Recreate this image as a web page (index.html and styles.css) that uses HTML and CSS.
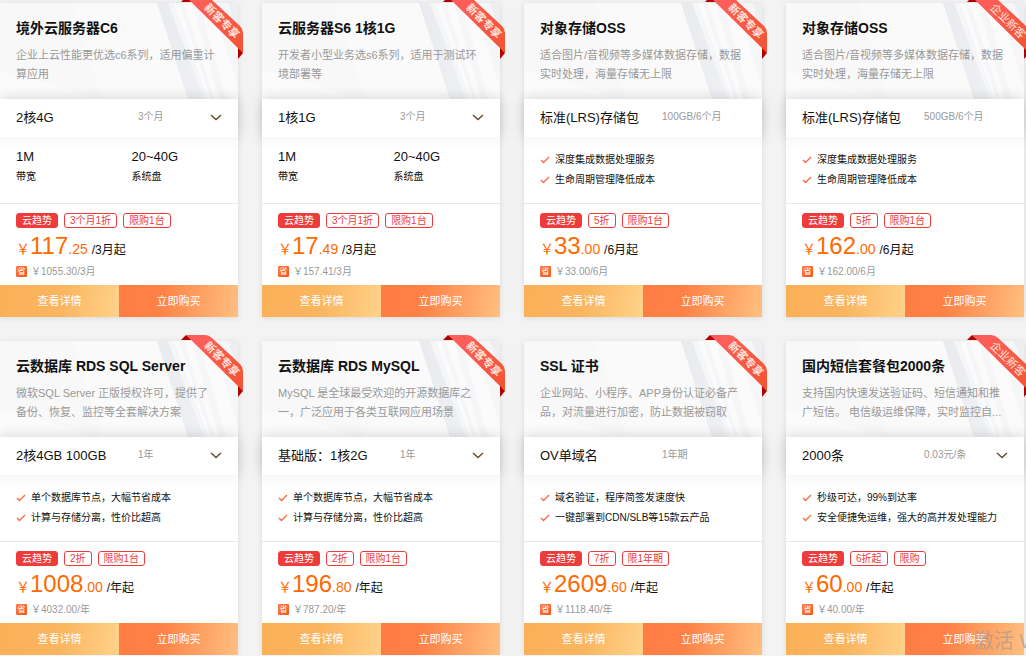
FILE: index.html
```
<!DOCTYPE html>
<html lang="zh-CN">
<head>
    <meta charset="UTF-8">
    <meta name="viewport" content="width=device-width, initial-scale=1.0">
    <title>云产品特惠</title>
    <link rel="stylesheet" href="styles.css">
</head>
<body>
    <svg width="0" height="0" class="symbols" aria-hidden="true">
        <linearGradient id="ribbon-fill" x1="0" y1="0" x2="1" y2="1">
            <stop offset="0" stop-color="#ff6060"/>
            <stop offset="1" stop-color="#f35330"/>
        </linearGradient>
        <symbol id="ribbon" viewBox="0 0 62 62">
            <path d="M0 5L5 0L12 5Z" fill="#b00000"/>
            <path d="M57 50L62 56L57 62Z" fill="#b00000"/>
            <path d="M5 0H24Q28 0 31 3L59 29Q62 32 62 36V56Z" fill="url(#ribbon-fill)"/>
        </symbol>
    </svg>

    <main class="products">
        <article class="card">
            <div class="ribbon"><svg><use href="#ribbon"/></svg><span>新客专享</span></div>
            <header class="head">
                <h2>境外云服务器C6</h2>
                <p>企业上云性能更优选c6系列，适用偏重计算应用</p>
            </header>
            <div class="spec">
                <select aria-label="规格"><option>2核4G</option></select>
                <span class="period">3个月</span>
            </div>
            <dl class="detail config">
                <div><dt>带宽</dt><dd>1M</dd></div>
                <div><dt>系统盘</dt><dd>20~40G</dd></div>
            </dl>
            <div class="offer">
                <div class="tags"><b>云趋势</b><span>3个月1折</span><span>限购1台</span></div>
                <p class="price">￥<strong>117</strong>.25 <small>/3月起</small></p>
                <p class="save"><i>省</i>￥1055.30/3月</p>
            </div>
            <div class="actions"><a href="#">查看详情</a><button type="button">立即购买</button></div>
        </article>

        <article class="card">
            <div class="ribbon"><svg><use href="#ribbon"/></svg><span>新客专享</span></div>
            <header class="head">
                <h2>云服务器S6 1核1G</h2>
                <p>开发者小型业务选s6系列，适用于测试环境部署等</p>
            </header>
            <div class="spec">
                <select aria-label="规格"><option>1核1G</option></select>
                <span class="period">3个月</span>
            </div>
            <dl class="detail config">
                <div><dt>带宽</dt><dd>1M</dd></div>
                <div><dt>系统盘</dt><dd>20~40G</dd></div>
            </dl>
            <div class="offer">
                <div class="tags"><b>云趋势</b><span>3个月1折</span><span>限购1台</span></div>
                <p class="price">￥<strong>17</strong>.49 <small>/3月起</small></p>
                <p class="save"><i>省</i>￥157.41/3月</p>
            </div>
            <div class="actions"><a href="#">查看详情</a><button type="button">立即购买</button></div>
        </article>

        <article class="card">
            <div class="ribbon"><svg><use href="#ribbon"/></svg><span>新客专享</span></div>
            <header class="head">
                <h2>对象存储OSS</h2>
                <p>适合图片/音视频等多媒体数据存储，数据实时处理，海量存储无上限</p>
            </header>
            <div class="spec">
                <span class="name">标准(LRS)存储包</span>
                <span class="period">100GB/6个月</span>
            </div>
            <ul class="detail features">
                <li>深度集成数据处理服务</li>
                <li>生命周期管理降低成本</li>
            </ul>
            <div class="offer">
                <div class="tags"><b>云趋势</b><span>5折</span><span>限购1台</span></div>
                <p class="price">￥<strong>33</strong>.00 <small>/6月起</small></p>
                <p class="save"><i>省</i>￥33.00/6月</p>
            </div>
            <div class="actions"><a href="#">查看详情</a><button type="button">立即购买</button></div>
        </article>

        <article class="card">
            <div class="ribbon company"><svg><use href="#ribbon"/></svg><span>企业新客</span></div>
            <header class="head">
                <h2>对象存储OSS</h2>
                <p>适合图片/音视频等多媒体数据存储，数据实时处理，海量存储无上限</p>
            </header>
            <div class="spec">
                <span class="name">标准(LRS)存储包</span>
                <span class="period">500GB/6个月</span>
            </div>
            <ul class="detail features">
                <li>深度集成数据处理服务</li>
                <li>生命周期管理降低成本</li>
            </ul>
            <div class="offer">
                <div class="tags"><b>云趋势</b><span>5折</span><span>限购1台</span></div>
                <p class="price">￥<strong>162</strong>.00 <small>/6月起</small></p>
                <p class="save"><i>省</i>￥162.00/6月</p>
            </div>
            <div class="actions"><a href="#">查看详情</a><button type="button">立即购买</button></div>
        </article>

        <article class="card">
            <div class="ribbon"><svg><use href="#ribbon"/></svg><span>新客专享</span></div>
            <header class="head">
                <h2>云数据库 RDS SQL Server</h2>
                <p>微软SQL Server 正版授权许可，提供了备份、恢复、监控等全套解决方案</p>
            </header>
            <div class="spec">
                <select aria-label="规格"><option>2核4GB 100GB</option></select>
                <span class="period">1年</span>
            </div>
            <ul class="detail features">
                <li>单个数据库节点，大幅节省成本</li>
                <li>计算与存储分离，性价比超高</li>
            </ul>
            <div class="offer">
                <div class="tags"><b>云趋势</b><span>2折</span><span>限购1台</span></div>
                <p class="price">￥<strong>1008</strong>.00 <small>/年起</small></p>
                <p class="save"><i>省</i>￥4032.00/年</p>
            </div>
            <div class="actions"><a href="#">查看详情</a><button type="button">立即购买</button></div>
        </article>

        <article class="card">
            <div class="ribbon"><svg><use href="#ribbon"/></svg><span>新客专享</span></div>
            <header class="head">
                <h2>云数据库 RDS MySQL</h2>
                <p>MySQL 是全球最受欢迎的开源数据库之一，广泛应用于各类互联网应用场景</p>
            </header>
            <div class="spec">
                <select aria-label="规格"><option>基础版：1核2G</option></select>
                <span class="period">1年</span>
            </div>
            <ul class="detail features">
                <li>单个数据库节点，大幅节省成本</li>
                <li>计算与存储分离，性价比超高</li>
            </ul>
            <div class="offer">
                <div class="tags"><b>云趋势</b><span>2折</span><span>限购1台</span></div>
                <p class="price">￥<strong>196</strong>.80 <small>/年起</small></p>
                <p class="save"><i>省</i>￥787.20/年</p>
            </div>
            <div class="actions"><a href="#">查看详情</a><button type="button">立即购买</button></div>
        </article>

        <article class="card">
            <div class="ribbon"><svg><use href="#ribbon"/></svg><span>新客专享</span></div>
            <header class="head">
                <h2>SSL 证书</h2>
                <p>企业网站、小程序、APP身份认证必备产品，对流量进行加密，防止数据被窃取</p>
            </header>
            <div class="spec">
                <span class="name">OV单域名</span>
                <span class="period">1年期</span>
            </div>
            <ul class="detail features">
                <li>域名验证，程序简签发速度快</li>
                <li>一键部署到CDN/SLB等15款云产品</li>
            </ul>
            <div class="offer">
                <div class="tags"><b>云趋势</b><span>7折</span><span>限1年期</span></div>
                <p class="price">￥<strong>2609</strong>.60 <small>/年起</small></p>
                <p class="save"><i>省</i>￥1118.40/年</p>
            </div>
            <div class="actions"><a href="#">查看详情</a><button type="button">立即购买</button></div>
        </article>

        <article class="card">
            <div class="ribbon company"><svg><use href="#ribbon"/></svg><span>企业新客</span></div>
            <header class="head">
                <h2>国内短信套餐包2000条</h2>
                <p>支持国内快速发送验证码、短信通知和推广短信。 电信级运维保障，实时监控自...</p>
            </header>
            <div class="spec">
                <select aria-label="规格"><option>2000条</option></select>
                <span class="period">0.03元/条</span>
            </div>
            <ul class="detail features">
                <li>秒级可达，99%到达率</li>
                <li>安全便捷免运维，强大的高并发处理能力</li>
            </ul>
            <div class="offer">
                <div class="tags"><b>云趋势</b><span>6折起</span><span>限购</span></div>
                <p class="price">￥<strong>60</strong>.00 <small>/年起</small></p>
                <p class="save"><i>省</i>￥40.00/年</p>
            </div>
            <div class="actions"><a href="#">查看详情</a><button type="button">立即购买</button></div>
        </article>
    </main>

    <div class="watermark">激活 Windows</div>
</body>
</html>
```

FILE: styles.css
```
* {
    box-sizing: border-box;
    margin: 0;
    padding: 0;
}
body {
    font-family: "Liberation Sans", "Noto Sans CJK SC", sans-serif;
    font-size: 11px;
    color: #111;
    background: #f3f3f3;
    overflow: hidden;
}
button, select {
    font: inherit;
    color: inherit;
    border: none;
    cursor: pointer;
}
.symbols {
    position: absolute;
}
.products {
    display: grid;
    grid-template-columns: repeat(4, 1fr);
    gap: 24px;
    padding: 3px 2px 0 0;
}
.card {
    position: relative;
    background: #fff;
    box-shadow: 0 1px 6px rgba(0, 0, 0, 0.1);
}

/* ribbon */
.ribbon {
    position: absolute;
    top: -6px;
    right: -5px;
    width: 62px;
    height: 62px;
    z-index: 2;
}
.ribbon svg {
    display: block;
    width: 100%;
    height: 100%;
}
.ribbon span {
    position: absolute;
    top: 16px;
    left: 17px;
    width: 48px;
    line-height: 16px;
    text-align: center;
    font-weight: bold;
    color: #ffe3da;
    transform: rotate(45deg);
}
.ribbon.company span {
    font-weight: normal;
}

/* title */
.head {
    height: 96px;
    padding: 15px 20px 15px 16px;
    background: #fafafa url("data:image/svg+xml,%3Csvg xmlns='http://www.w3.org/2000/svg' viewBox='0 0 238 96' preserveAspectRatio='none'%3E%3Cdefs%3E%3ClinearGradient id='a'%3E%3Cstop stop-color='%23e8eaed'/%3E%3Cstop offset='1' stop-color='%23f0f1f4'/%3E%3C/linearGradient%3E%3C/defs%3E%3Cpath d='M72 0L102 96H0V0Z' fill='%23f8f8f8'/%3E%3Cpath d='M0 68Q50 78 92 96H0Z' fill='%23fbfbfb'/%3E%3Cpath d='M157 0H238V96H188Z' fill='%23f5f6f8'/%3E%3Cpath d='M157 0H168L204 96H188Z' fill='url(%23a)'/%3E%3Cpath d='M174 0H179L211 96H208ZM184 0H192L219 96H214ZM199 0H212L238 84V96H226Z' fill='%23fbfbfc'/%3E%3Cpath d='M228 0H238V28Z' fill='%23eceef2'/%3E%3C/svg%3E") 0 0 / 100% 100%;
}
.head h2 {
    font-size: 14px;
    line-height: 20px;
    margin-bottom: 8px;
}
.head p {
    line-height: 19px;
    color: #999;
}

/* specification */
.spec {
    position: relative;
    display: grid;
    grid-template-columns: 58% 1fr;
    height: 38px;
    line-height: 36px;
    background: #fff;
    box-shadow: 0 0 14px rgba(0, 0, 0, 0.17);
}
.spec select, .spec .name {
    grid-row: 1;
    grid-column: 1 / -1;
    height: 38px;
    padding-left: 16px;
    font-size: 13px;
    line-height: 38px;
}
.spec select {
    appearance: none;
    background: url("data:image/svg+xml,%3Csvg xmlns='http://www.w3.org/2000/svg' width='12' height='8' fill='none' stroke='%23634a28' stroke-width='1.4'%3E%3Cpath d='M1 1L6 5.5L11 1'/%3E%3C/svg%3E") no-repeat right 16px center;
}
.period {
    grid-row: 1;
    grid-column: 2;
    font-size: 10px;
    color: #999;
    pointer-events: none;
}

/* details */
.detail {
    height: 67px;
    border-bottom: 1px solid #e8e8e8;
    background: linear-gradient(#f8f8f8, #fff 12px);
    position: relative;
}
.config {
    display: grid;
    grid-template-columns: 52% 1fr;
    padding: 10px 0 0 16px;
}
.config div {
    display: flex;
    flex-direction: column-reverse;
    justify-content: flex-end;
}
.config dd {
    font-size: 13px;
    line-height: 20px;
}
.config dt {
    font-size: 10px;
    line-height: 20px;
}
.features {
    padding: 13px 0 0 16px;
    list-style: none;
}
.features li {
    padding-left: 15px;
    font-size: 10px;
    line-height: 20px;
    background: url("data:image/svg+xml,%3Csvg xmlns='http://www.w3.org/2000/svg' width='10' height='8' fill='none' stroke='%23ff6a45' stroke-width='1.4'%3E%3Cpath d='M1 4L3.500 6.500L9 1'/%3E%3C/svg%3E") no-repeat left center;
}

/* price */
.offer {
    padding: 9px 16px 5px;
}
.tags {
    display: flex;
    gap: 6px;
    font-size: 10px;
    line-height: 13px;
    color: #ee3b3b;
}
.tags b, .tags span {
    padding: 0 5px;
    border: 1px solid #ee3b3b;
    border-radius: 3px;
}
.tags b {
    font-weight: normal;
    color: #fff;
    background: #ee3b3b;
}
.price {
    height: 35px;
    font-size: 14px;
    line-height: 35px;
    color: #ff6a00;
}
.price strong {
    font-size: 24px;
    font-weight: normal;
}
.price small {
    font-size: 12px;
    color: #111;
}
.save {
    display: flex;
    align-items: center;
    gap: 4px;
    height: 17px;
    font-size: 10px;
    line-height: 16px;
    color: #999;
}
.save i {
    width: 11px;
    height: 11px;
    border-radius: 1px;
    font-size: 8px;
    font-style: normal;
    line-height: 11px;
    text-align: center;
    color: #fff;
    background: linear-gradient(135deg, #ff7f45, #f9541c);
}
.actions {
    display: grid;
    grid-template-columns: 1fr 1fr;
}
.actions a, .actions button {
    height: 32px;
    line-height: 32px;
    text-align: center;
    text-decoration: none;
    color: #fff;
}
.actions a {
    background: linear-gradient(100deg, #fbb057 0%, #fab55f 50%, #ffd28a 100%);
}
.actions button {
    background: linear-gradient(100deg, #ff7d42 0%, #ff8146 35%, #ffc080 100%);
}

.watermark {
    position: fixed;
    left: calc(100% - 52px);
    bottom: 2px;
    z-index: 3;
    font-size: 20px;
    line-height: 26px;
    white-space: nowrap;
    color: rgba(150, 150, 150, 0.6);
    pointer-events: none;
}
```
